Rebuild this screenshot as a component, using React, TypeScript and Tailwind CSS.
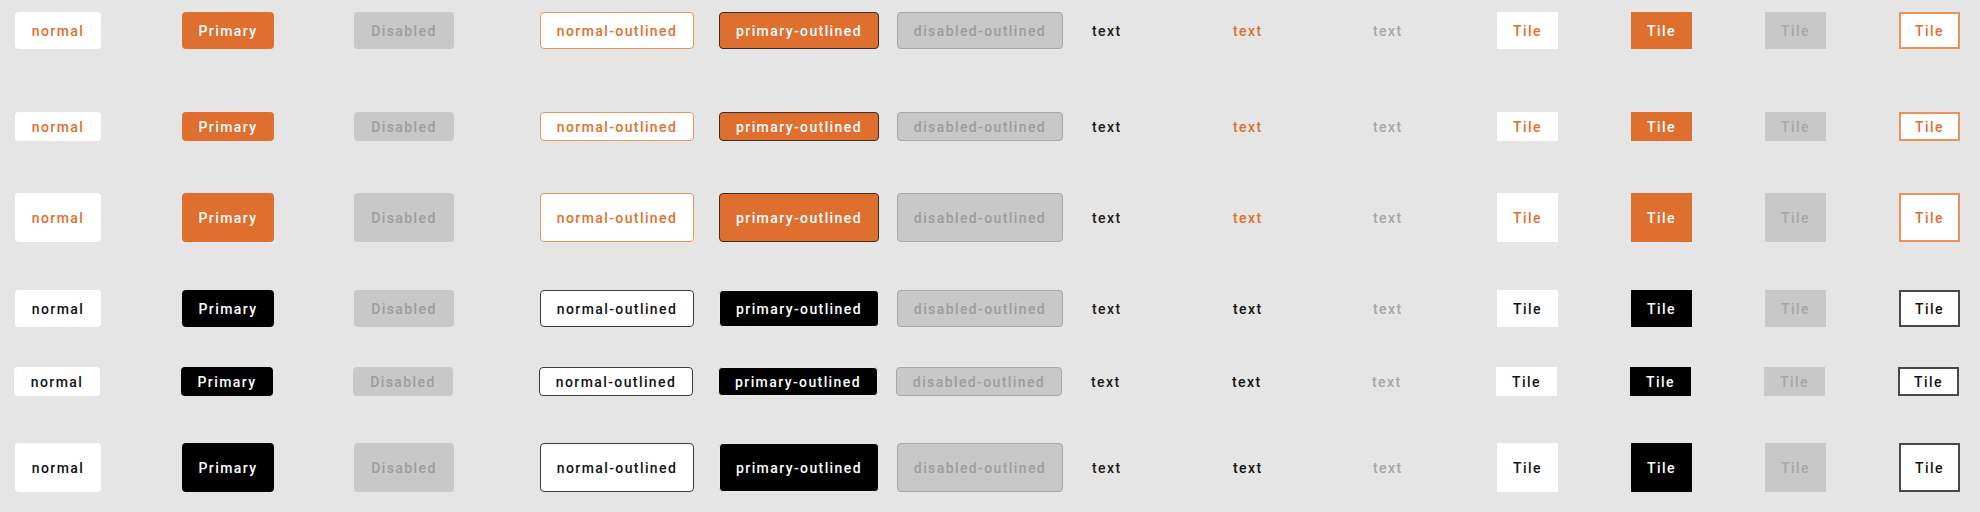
import React from 'react';

type Theme = {
  name: string;
  accentText: string;
  accentBg: string;
  outline: string;
  primaryOutline: string;
  tileOutline: string;
};

const themes: Record<string, Theme> = {
  orange: {
    name: 'orange',
    accentText: 'text-[#df6f2f]',
    accentBg: 'bg-[#df6f2f]',
    outline: 'border-[#e8945f]',
    primaryOutline: 'border-[#3a2e28]',
    tileOutline: 'border-[#e8925c]',
  },
  black: {
    name: 'black',
    accentText: 'text-[#111111]',
    accentBg: 'bg-black',
    outline: 'border-[#3c3c3c]',
    primaryOutline: 'border-[#e9e9e9]',
    tileOutline: 'border-[#484848]',
  },
};

// row heights: small / medium / large
const rows = [
  { theme: themes.orange, h: 'h-[37px]', mt: 'mt-[12px]', shift: '' },
  { theme: themes.orange, h: 'h-[29px]', mt: 'mt-[63px]', shift: '' },
  { theme: themes.orange, h: 'h-[49px]', mt: 'mt-[52px]', shift: '' },
  { theme: themes.black, h: 'h-[37px]', mt: 'mt-[48px]', shift: '' },
  { theme: themes.black, h: 'h-[29px]', mt: 'mt-[40px]', shift: '-ml-px' },
  { theme: themes.black, h: 'h-[49px]', mt: 'mt-[47px]', shift: '' },
];

const label = 'font-medium text-[14px] leading-none tracking-[0.1em] whitespace-nowrap';
const box = 'flex items-center justify-center h-full rounded-[4px] ' + label;
const tile = 'flex items-center justify-center h-full w-[61px] ' + label;

const Row = ({ theme, h, mt, shift }: { theme: Theme; h: string; mt: string; shift: string }) => (
  <div
    className={`grid ${h} ${mt} ${shift} pl-[15px] items-center grid-cols-[167px_172px_186px_179px_178px_195px_141px_140px_124px_134px_134px_134px_auto]`}
  >
    <div className={`${box} w-[86px] bg-white ${theme.accentText}`}>normal</div>
    <div className={`${box} w-[92px] ${theme.accentBg} text-white`}>Primary</div>
    <div className={`${box} w-[100px] bg-[#c8c8c8] text-[#9c9c9c]`}>Disabled</div>
    <div className={`${box} w-[154px] bg-white border ${theme.outline} ${theme.accentText}`}>normal-outlined</div>
    <div className={`${box} w-[160px] ${theme.accentBg} border ${theme.primaryOutline} text-white`}>primary-outlined</div>
    <div className={`${box} w-[166px] bg-[#c8c8c8] border border-[#a8a8a8] text-[#9c9c9c]`}>disabled-outlined</div>
    <div className={`${label} text-[#1a1a1a]`}>text</div>
    <div className={`${label} ${theme.accentText}`}>text</div>
    <div className={`${label} text-[#a6a6a6]`}>text</div>
    <div className={`${tile} bg-white ${theme.accentText}`}>Tile</div>
    <div className={`${tile} ${theme.accentBg} text-white`}>Tile</div>
    <div className={`${tile} bg-[#c8c8c8] text-[#a6a6a6]`}>Tile</div>
    <div className={`${tile} bg-white border-2 ${theme.tileOutline} ${theme.accentText}`}>Tile</div>
  </div>
);

export default function App() {
  return (
    <div className="w-[1980px] h-[512px] bg-[#e5e5e5] font-['Roboto',sans-serif] flex flex-col overflow-hidden">
      {rows.map((r, i) => (
        <Row key={i} {...r} />
      ))}
    </div>
  );
}
